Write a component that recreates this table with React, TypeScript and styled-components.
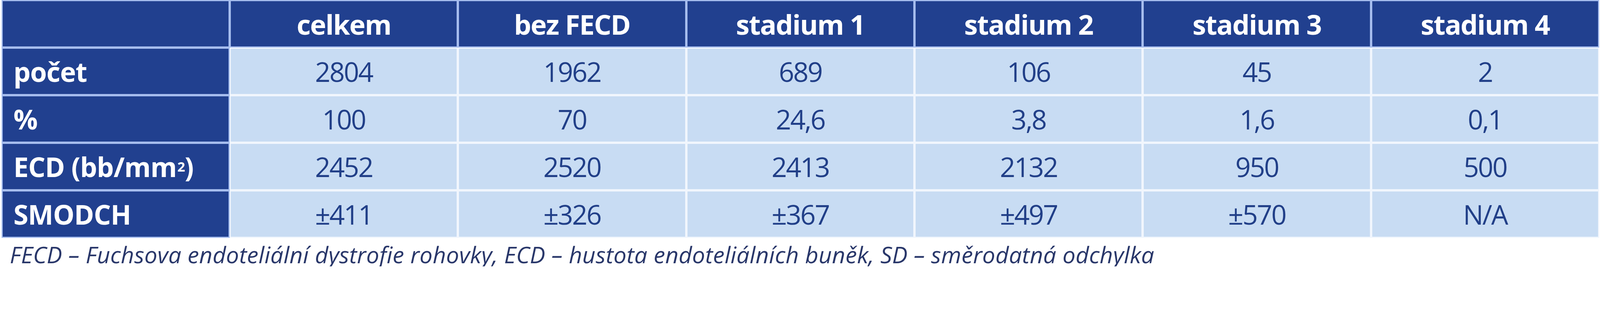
import React from "react";
import styled, { createGlobalStyle } from "styled-components";

/* every size is given in reference pixels and scaled to the viewport width */
const u = (n: number) => `calc(${n} * 100vw / 4566)`;

const Global = createGlobalStyle`
  html, body { margin: 0; padding: 0; background: #ffffff; overflow: hidden; }
  body { font-family: "Open Sans", "Noto Sans", sans-serif; }
`;

const Page = styled.div`
  padding-left: ${u(4)};
  width: 100vw;
  box-sizing: border-box;
`;

const Grid = styled.div`
  display: grid;
  grid-template-columns: repeat(7, minmax(0, 1fr));
  width: ${u(4560)};
`;

const CellBase = styled.div`
  box-sizing: border-box;
  height: ${u(136)};
  border: ${u(4)} solid;
  display: flex;
  align-items: center;
  font-family: "Open Sans", "Noto Sans", sans-serif;
  white-space: nowrap;
  overflow: hidden;
`;

const HeadCell = styled(CellBase)`
  background: #21408f;
  border-color: #a6bdee;
  color: #ffffff;
  font-weight: 700;
  font-size: ${u(78)};
  letter-spacing: ${u(-2)};
  justify-content: center;
`;

const LabelCell = styled(CellBase)`
  background: #21408f;
  border-color: #a6bdee;
  color: #ffffff;
  font-weight: 700;
  font-size: ${u(77)};
  letter-spacing: ${u(-1)};
  padding-left: ${u(31)};
  justify-content: flex-start;

  sup {
    font-size: 0.5em;
    line-height: 0;
    vertical-align: 0.85em;
    margin-left: ${u(2)};
  }
`;

const DataCell = styled(CellBase)`
  background: #c8dcf3;
  border-color: #f1f6fd;
  color: #213f88;
  font-weight: 400;
  font-size: ${u(77)};
  letter-spacing: ${u(-3)};
  justify-content: center;
`;

const Caption = styled.p`
  margin: ${u(15)} 0 0 ${u(24)};
  font-family: "Open Sans", "Noto Sans", sans-serif;
  font-style: italic;
  font-weight: 400;
  font-size: ${u(66)};
  line-height: 1;
  letter-spacing: ${u(0.3)};
  color: #29376a;
  white-space: nowrap;
`;

const headers = ["celkem", "bez FECD", "stadium 1", "stadium 2", "stadium 3", "stadium 4"];

const rows: { label: React.ReactNode; values: string[] }[] = [
  { label: "počet", values: ["2804", "1962", "689", "106", "45", "2"] },
  { label: "%", values: ["100", "70", "24,6", "3,8", "1,6", "0,1"] },
  {
    label: (
      <>
        ECD (bb/mm<sup>2</sup>)
      </>
    ),
    values: ["2452", "2520", "2413", "2132", "950", "500"],
  },
  { label: "SMODCH", values: ["±411", "±326", "±367", "±497", "±570", "N/A"] },
];

export default function App() {
  return (
    <Page>
      <Global />
      <Grid>
        <HeadCell />
        {headers.map((h) => (
          <HeadCell key={h}>{h}</HeadCell>
        ))}
        {rows.map((r, i) => (
          <React.Fragment key={i}>
            <LabelCell>{r.label}</LabelCell>
            {r.values.map((v, j) => (
              <DataCell key={j}>{v}</DataCell>
            ))}
          </React.Fragment>
        ))}
      </Grid>
      <Caption>
        FECD – Fuchsova endoteliální dystrofie rohovky, ECD – hustota endoteliálních buněk, SD – směrodatná odchylka
      </Caption>
    </Page>
  );
}
